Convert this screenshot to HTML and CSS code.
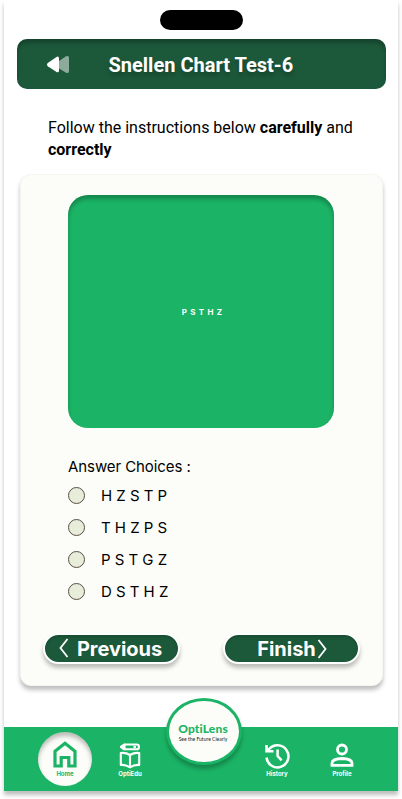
FILE: index.html
```html
<!DOCTYPE html>
<html lang="en">
<head>
<meta charset="utf-8">
<meta name="viewport" content="width=device-width, initial-scale=1">
<title>OptiLens – Snellen Chart Test</title>
<link rel="stylesheet" href="styles.css">
</head>
<body>
<div class="phone">
  <div class="island"></div>
  <header class="header">
    <svg class="back" width="24" height="20" viewBox="0 0 24 20">
      <path d="M8.500 8.600 19 1.300Q22 0 22 3V16Q22 19 19 17.700L8.500 11.200Q6.500 9.900 8.500 8.600Z" fill="#8dab9b"/>
      <path d="M.8 8.100 9.500 1.900Q12 .8 12 3.500V15.500Q12 18.200 9.500 17L.8 11.200Q-.8 9.700.8 8.100Z" fill="#fff"/>
    </svg>
    <h1 class="title">Snellen Chart Test-6</h1>
  </header>
  <p class="instructions">Follow the instructions below <b>carefully</b> and <b>correctly</b></p>
  <main class="card">
    <div class="chart"><span class="chart-letters">P S T H Z</span></div>
    <h2 class="question">Answer Choices :</h2>
    <ul class="choices">
      <li class="choice"><span class="radio"></span><span>H Z S T P</span></li>
      <li class="choice"><span class="radio"></span><span>T H Z P S</span></li>
      <li class="choice"><span class="radio"></span><span>P S T G Z</span></li>
      <li class="choice"><span class="radio"></span><span>D S T H Z</span></li>
    </ul>
    <div class="actions">
      <button class="button button-previous">
        <svg class="chevron-left" width="10" height="20" viewBox="0 0 10 20"><path d="M8.500 1 1.500 10l7 9" fill="none" stroke="#fff" stroke-width="1.800"/></svg>
        <span class="button-text">Previous</span>
      </button>
      <button class="button button-finish">
        <span class="button-text">Finish</span>
        <svg class="chevron-right" width="10" height="20" viewBox="0 0 10 20"><path d="M1.500 1l7 9-7 9" fill="none" stroke="#fff" stroke-width="1.800"/></svg>
      </button>
    </div>
  </main>
  <nav class="nav">
    <a class="tab tab-home">
      <svg width="24" height="27" viewBox="0 0 24 27"><path d="M2 10.300 12 2.200l10 8.100V25H15.800V16.500H8.200V25H2Z" fill="none" stroke="#1bb466" stroke-width="3.200"/></svg>
      <span class="label">Home</span>
    </a>
    <a class="tab tab-edu">
      <svg width="22" height="26" viewBox="0 0 22 26" fill="none" stroke="#fff" stroke-width="2.100" stroke-linejoin="round">
        <path d="M5.500 1.500H17.500Q20 1.500 20 3.900T17.500 6.300H5.500L2 3.900Z"/>
        <path d="M5.500 1.500V6.300L2 3.900ZM14.500 3.900h2.500"/>
        <path d="M11 12Q6.500 9.300 1.800 10V22Q6.500 21.500 11 24.300Q15.500 21.500 20.200 22V10Q15.500 9.300 11 12ZM11 12V24.300"/>
      </svg>
      <span class="label">OptiEdu</span>
    </a>
    <a class="tab tab-history">
      <svg width="25" height="26" viewBox="0 0 25 26" fill="none" stroke="#fff" stroke-width="2.500">
        <path d="M1.500 14.500A11 11 0 1 0 4 6.300L2.500 8M1.500 2V8.300H8.500"/>
        <path d="M12.600 6.500V13l4 4.300"/>
        <path d="M1.500 4v4.300H6Z" fill="#fff" stroke-width="1"/>
      </svg>
      <span class="label">History</span>
    </a>
    <a class="tab tab-profile">
      <svg width="24" height="26" viewBox="0 0 24 26" fill="none" stroke="#fff" stroke-width="2.800">
        <circle cx="12" cy="6.500" r="4.500"/>
        <path d="M2 22.400V20Q2.500 15.800 12 15.500Q21.500 15.800 22 20v2.400Z"/>
      </svg>
      <span class="label">Profile</span>
    </a>
    <div class="brand">
      <span class="brand-name">OptiLens</span>
      <span class="brand-tagline">See the Future Clearly</span>
    </div>
  </nav>
</div>
</body>
</html>
```
FILE: styles.css
```css
* {
  box-sizing: border-box;
}

body {
  margin: 0;
  height: 799px;
  overflow: hidden;
  background: #fff;
  color: #000;
  font-family: Inter, "Liberation Sans", sans-serif;
}

.phone {
  display: flex;
  flex-direction: column;
  height: 791px;
  margin: 0 4px;
  padding-top: 10px;
  background: #fff;
  box-shadow: 0 4px 4px rgba(0, 0, 0, 0.25);
}

.island {
  flex: none;
  width: 83px;
  height: 20px;
  margin-left: 156px;
  border-radius: 10px;
  background: #000;
}

.header {
  display: flex;
  flex: none;
  align-items: center;
  height: 50px;
  margin: 9px 12px 0 13px;
  padding-left: 30px;
  border-radius: 10px;
  background: #1c593a;
  box-shadow: inset 0 4px 4px rgba(0, 0, 0, 0.25);
}

.back {
  flex: none;
  margin-top: 1px;
}

.title {
  margin: 2px 0 0 37.5px;
  font: 700 20px/24px Roboto, sans-serif;
  color: #fff;
  white-space: nowrap;
  text-shadow: 0 4px 4px rgba(0, 0, 0, 0.25);
}

.instructions {
  flex: none;
  width: 320px;
  height: 44px;
  margin: 28px 0 0 44px;
  font: 400 16px/22px Roboto, sans-serif;
}

.instructions b {
  font-weight: 700;
}

.card {
  flex: none;
  width: 363px;
  height: 512px;
  margin: 13px 0 0 16px;
  padding: 20px 22px 0 22px;
  border: 1px solid #f5f6ee;
  border-radius: 11px;
  background: #fcfdf8;
  box-shadow: 0 4px 4px rgba(0, 0, 0, 0.25);
}

.chart {
  display: flex;
  align-items: center;
  justify-content: center;
  width: 266px;
  height: 233px;
  margin-left: 25px;
  border-radius: 20px;
  background: #1bb466;
  box-shadow: inset 0 4px 4px rgba(0, 0, 0, 0.25);
}

.chart-letters {
  margin-left: 2px;
  font: 700 8px/10px Inter, sans-serif;
  letter-spacing: 0.3px;
  word-spacing: 0.8px;
  color: #fff;
}

.question {
  margin: 29px 0 0 25px;
  font-size: 15px;
  font-weight: 400;
  line-height: 20px;
  letter-spacing: -0.08px;
}

.choices {
  margin: 2px 0 0 25px;
  padding: 0;
  list-style: none;
}

.choice {
  display: flex;
  align-items: center;
  gap: 16px;
  height: 32px;
  font-size: 15px;
  letter-spacing: -0.03px;
}

.radio {
  width: 17px;
  height: 17px;
  border: 1px solid #594e48;
  border-radius: 50%;
  background: #e8edda;
}

.actions {
  display: flex;
  justify-content: space-between;
  margin-top: 26px;
}

.button {
  display: flex;
  align-items: center;
  justify-content: center;
  width: 137px;
  height: 31px;
  padding: 0;
  border: 2px solid #fff;
  border-radius: 16px;
  background: #1c593a;
  box-shadow: 0 4px 4px rgba(0, 0, 0, 0.25), inset 0 2px 3px rgba(0, 0, 0, 0.15);
  font: 700 20px/26px Inter, sans-serif;
  color: #fff;
}

.button-previous {
  padding-right: 2px;
}

.button-finish {
  padding-left: 1px;
}

.button-text {
  letter-spacing: -0.05px;
}

.chevron-left {
  margin-right: 8px;
  margin-bottom: 2px;
}

.chevron-right {
  margin-left: 1px;
}

.nav {
  position: relative;
  display: flex;
  flex: none;
  height: 64px;
  margin-top: auto;
  background: #1bb466;
  color: #fff;
}

.tab {
  display: flex;
  flex-direction: column;
  align-items: center;
  justify-content: flex-end;
  width: 54px;
  height: 54px;
  margin-top: 5px;
  padding-bottom: 8px;
}

.label {
  margin-top: 1px;
  font: 700 6px/8px Inter, sans-serif;
}

.tab-home {
  margin-left: 34px;
  border-radius: 50%;
  background: #fcfdf8;
  box-shadow: inset 0 4px 4px rgba(0, 0, 0, 0.25);
  color: #1bb466;
}

.tab-home .label {
  margin-top: 2px;
}

.tab-edu {
  margin-left: 11px;
}

.tab-history {
  margin-left: 93px;
}

.tab-profile {
  margin-left: 11px;
}

.brand {
  position: absolute;
  top: -29px;
  left: 162px;
  display: flex;
  flex-direction: column;
  align-items: center;
  justify-content: center;
  width: 76px;
  height: 67px;
  padding-right: 2px;
  border: 3px solid #1bb466;
  border-radius: 50%;
  background: #fcfdf8;
  box-shadow: 0 4px 4px rgba(0, 0, 0, 0.25);
  white-space: nowrap;
}

.brand-name {
  font: 900 12px/15px Lato, sans-serif;
  letter-spacing: 0.15px;
  color: #1bb466;
}

.brand-tagline {
  font: 400 5px/6px Lato, sans-serif;
  color: #222;
}
```
